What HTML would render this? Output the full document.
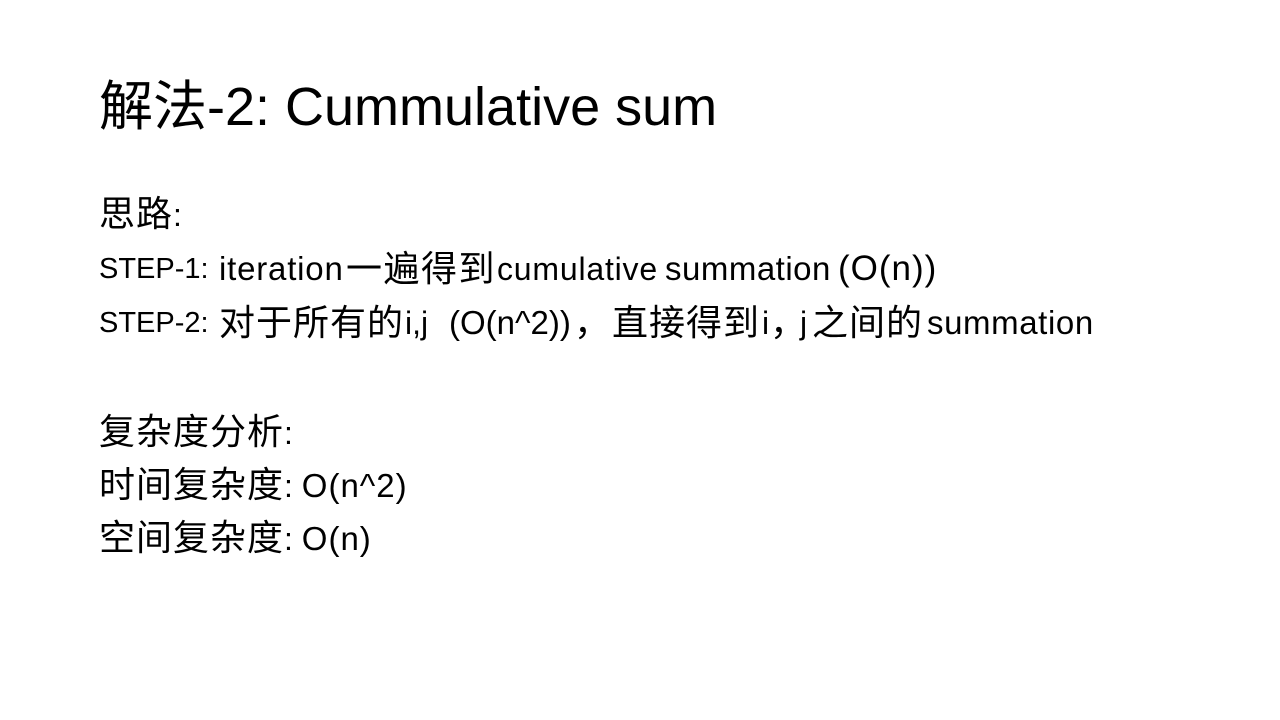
<!DOCTYPE html>
<html><head><meta charset="utf-8"><style>
body{margin:0;width:1280px;height:720px;background:#fff;overflow:hidden;font-family:"Liberation Sans","Noto Sans CJK SC",sans-serif;color:#000}
.t{position:absolute;left:99px;top:72px;font-size:54px;line-height:70px;white-space:nowrap}
.b{position:absolute;left:99px;height:44px;white-space:nowrap;line-height:44px}
.p{position:absolute;white-space:nowrap;line-height:44px;top:0}
.c{font-size:36px;letter-spacing:1px}
.l{font-size:32px}
</style></head><body>
<div class="t">解法-2: Cummulative sum</div>
<div class="b" style="top:192px"><span class="c">思路</span><span class="l">:</span></div>
<div class="b" style="top:247px;left:0;width:1280px">
<span class="p l" style="left:99px;font-size:29px">STEP-1:</span>
<span class="p l" style="left:219px;font-size:33px;letter-spacing:0.8px">iteration</span>
<span class="p c" style="left:346px;letter-spacing:1.5px">一遍得到</span>
<span class="p l" style="left:497px;letter-spacing:0.8px">cumulative</span>
<span class="p l" style="left:665px;font-size:33px;letter-spacing:0.5px">summation</span>
<span class="p l" style="left:838px;font-size:35px;letter-spacing:1px">(O(n))</span>
</div>
<div class="b" style="top:301px;left:0;width:1280px">
<span class="p l" style="left:99px;font-size:29px">STEP-2:</span>
<span class="p c" style="left:219px">对于所有的</span>
<span class="p l" style="left:405px">i,j</span>
<span class="p l" style="left:449px;font-size:33px">(O(n^2))</span>
<span class="p c" style="left:574px">，</span>
<span class="p c" style="left:612px">直接得到</span>
<span class="p l" style="left:762px">i</span>
<span class="p c" style="left:770px">，</span>
<span class="p l" style="left:800px">j</span>
<span class="p c" style="left:812px">之间的</span>
<span class="p l" style="left:927px;font-size:33px;letter-spacing:0.6px">summation</span>
</div>
<div class="b" style="top:410px"><span class="c">复杂度分析</span><span class="l">:</span></div>
<div class="b" style="top:463px"><span class="c">时间复杂度</span><span class="l">: </span><span class="l" style="font-size:33px;letter-spacing:1px">O(n^2)</span></div>
<div class="b" style="top:516px"><span class="c">空间复杂度</span><span class="l">: </span><span class="l" style="font-size:33px;letter-spacing:1px">O(n)</span></div>
</body></html>
